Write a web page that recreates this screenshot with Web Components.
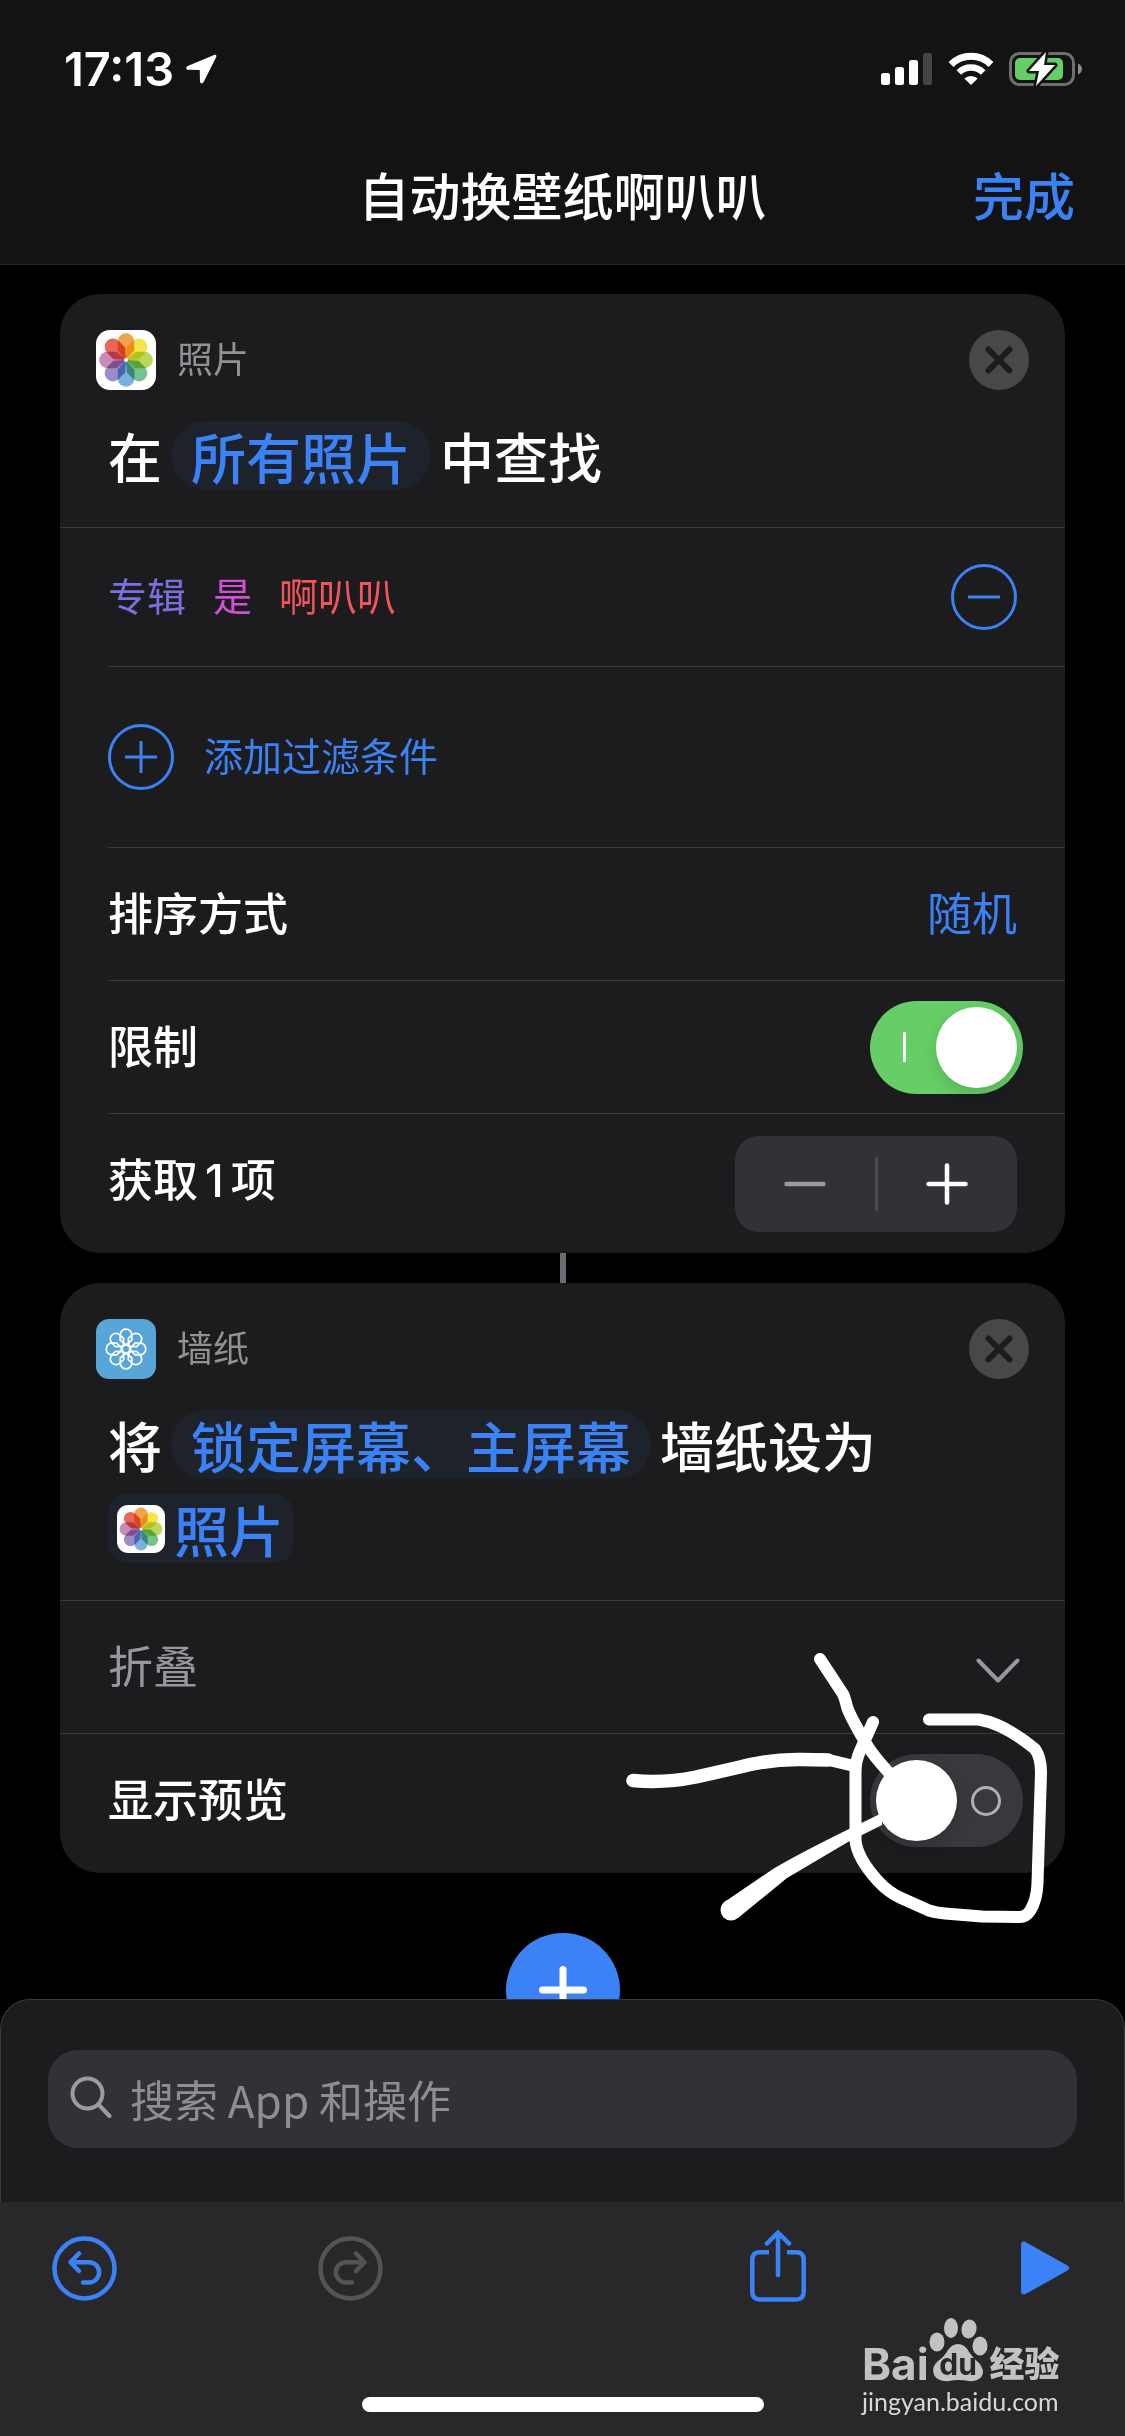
<!DOCTYPE html>
<html lang="zh-CN">
<head>
<meta charset="utf-8">
<meta name="viewport" content="width=device-width, initial-scale=1">
<title>自动换壁纸啊叭叭</title>
<style>
    :root {
        --blue: #3b82f7;
        --gray: #929194;
        --card: #1c1c1e;
        --control: #323136;
        --line: #3a3a3c;
    }

    body {
        margin: 0;
        background: #000;
        color: #fff;
        font-family: Inter, "Noto Sans CJK SC", sans-serif;
        font-size: 45px;
        line-height: 1.4;
    }
</style>
</head>
<body>
<shortcut-editor>
    <status-bar slot="top" time="17:13"></status-bar>
    <nav-bar slot="top" action="完成">自动换壁纸啊叭叭</nav-bar>

    <action-card name="照片" icon="photos">
        <summary-line slot="summary">
            <span>在</span>
            <param-pill>所有照片</param-pill>
            <span>中查找</span>
        </summary-line>
        <filter-row field="专辑" operator="是" value="啊叭叭"></filter-row>
        <add-filter-row>添加过滤条件</add-filter-row>
        <value-row value="随机">排序方式</value-row>
        <toggle-row checked>限制</toggle-row>
        <stepper-row class="last" count="1"></stepper-row>
    </action-card>

    <step-link></step-link>

    <action-card name="墙纸" icon="wallpaper">
        <summary-line slot="summary">
            <span>将</span>
            <param-pill>锁定屏幕、主屏幕</param-pill>
            <span>墙纸设为</span>
            <param-pill variable icon="photos">照片</param-pill>
        </summary-line>
        <collapse-row>折叠</collapse-row>
        <toggle-row class="last full">显示预览</toggle-row>
        <ink-marks slot="overlay"></ink-marks>
    </action-card>

    <add-button></add-button>

    <search-panel slot="bottom" hint="搜索 App 和操作"></search-panel>
    <tool-bar slot="bottom"></tool-bar>
</shortcut-editor>

<script>
class BaseElement extends HTMLElement {
    constructor() {
        super();
        this.attachShadow({ mode: 'open' });
    }

    connectedCallback() {
        this.shadowRoot.innerHTML = `
            <style>
                * { box-sizing: border-box; }
                :host { display: block; box-sizing: border-box; }
                svg { display: block; flex: none; }
                button {
                    flex: none;
                    padding: 0;
                    border: 0;
                    background: none;
                    color: var(--blue);
                    font: inherit;
                    cursor: pointer;
                }
            </style>
            ${this.render()}
        `;
    }
}

class ShortcutEditor extends BaseElement {
    render() {
        return `
            <style>
                :host { display: flex; flex-direction: column; height: 100vh; }
                header {
                    background: #131313;
                    border-bottom: 1px solid #252527;
                }
                main {
                    flex: 1;
                    min-height: 0;
                    overflow: auto;
                    scrollbar-width: none;
                    padding: 29px 60px 0;
                }
            </style>
            <header><slot name="top"></slot></header>
            <main><slot></slot></main>
            <footer><slot name="bottom"></slot></footer>
        `;
    }
}

class StatusBar extends BaseElement {
    render() {
        return `
            <style>
                :host {
                    display: flex;
                    align-items: center;
                    gap: 12px;
                    height: 138px;
                    padding: 0 42px 0 64px;
                    font-size: 47px;
                    font-weight: 600;
                }
                .signals { display: flex; align-items: center; gap: 15px; margin-left: auto; }
            </style>
            <span>${this.getAttribute('time')}</span>
            <svg width="31" height="30" viewBox="0 0 32 30" fill="#fff">
                <path d="M29 .5 1.800 11.800C-.5 12.900 .1 15.800 2.200 15.800L14.200 16 14.400 27.600C14.400 30.200 17.200 30.400 18.200 28.400L31.200 2.600C31.900 1 30.700-.2 29 .5Z"/>
            </svg>
            <div class="signals">
                <svg width="52" height="34" viewBox="0 0 52 34" fill="#fff">
                    <rect x="0" y="21" width="9" height="12" rx="2.500"/>
                    <rect x="14" y="15" width="9" height="18" rx="2.500"/>
                    <rect x="28" y="8" width="9" height="25" rx="2.500"/>
                    <rect x="42" y="1" width="9" height="32" rx="2.500" fill="#454545"/>
                </svg>
                <svg width="46" height="34" viewBox="0 0 46 34" fill="none" stroke="#fff" stroke-width="7">
                    <path d="M3 12.500A28.500 28.500 0 0 1 43 12.500"/>
                    <path d="M10.800 20.500A17.500 17.500 0 0 1 35.200 20.500" stroke-width="6.500"/>
                    <path d="M23 33 16.300 26.600A9.800 9.800 0 0 1 29.700 26.600Z" fill="#fff" stroke="none"/>
                </svg>
                <svg width="74" height="36" viewBox="0 0 74 36">
                    <rect x="1.500" y="2.500" width="63" height="31" rx="9" fill="none" stroke="#6f6f6f" stroke-width="3"/>
                    <path d="M69 12.500Q73 14.500 73 18T69 23.500Z" fill="#8a8a8a"/>
                    <rect x="6" y="7" width="48" height="22" rx="5" fill="#67ce67"/>
                    <path d="M37 1 20 20H30L27 35 46 14H35Z" fill="#fff" stroke="#131313" stroke-width="5" stroke-linejoin="round" paint-order="stroke"/>
                </svg>
            </div>
        `;
    }
}

class NavBar extends BaseElement {
    render() {
        return `
            <style>
                :host {
                    display: grid;
                    grid-template-columns: 1fr auto 1fr;
                    align-items: center;
                    height: 126px;
                    padding: 0 50px 6px;
                    font-size: 51px;
                    font-weight: 500;
                }
                h1 { grid-column: 2; margin: 0; font: inherit; }
                button { justify-self: end; }
            </style>
            <h1><slot></slot></h1>
            <button type="button">${this.getAttribute('action')}</button>
        `;
    }
}

const petals = shape => [0, 45, 90, 135, 180, 225, 270, 315]
    .map((angle, i) => shape(`transform="rotate(${angle})"`, i))
    .join('');

const petalColors = ['#f1a24c', '#f6e549', '#bcd65e', '#76c28c', '#79b1e0', '#9d8dc6', '#cb8bb7', '#e6675b'];

const appIcons = {
    photos: `
        <rect x="-30" y="-30" width="60" height="60" rx="14" fill="#fff"/>
        <g style="isolation: isolate">
            ${petals((turn, i) => `<path ${turn} fill="${petalColors[i]}" style="mix-blend-mode: multiply" d="M0 0-8.300-9.500V-18.500A8.300 8.300 0 0 1 8.300-18.500V-9.500Z"/>`)}
        </g>
        <circle r="2" fill="#fff"/>
    `,
    wallpaper: `
        <rect x="-30" y="-30" width="60" height="60" rx="13" fill="#58a6d8"/>
        <g fill="none" stroke="#fff" stroke-width="1.700">
            ${petals(turn => `<path ${turn} d="M0-4-5.800-9V-14A5.800 5.800 0 0 1 5.800-14V-9Z"/>`)}
            <circle r="4"/>
        </g>
    `
};

class AppIcon extends BaseElement {
    render() {
        return `
            <style>
                :host { flex: none; width: 60px; height: 60px; }
                svg { width: 100%; height: 100%; }
            </style>
            <svg viewBox="-30 -30 60 60">${appIcons[this.getAttribute('name')]}</svg>
        `;
    }
}

class ActionCard extends BaseElement {
    render() {
        return `
            <style>
                :host {
                    position: relative;
                    background: var(--card);
                    border-radius: 40px;
                }
                .head {
                    display: flex;
                    align-items: center;
                    gap: 21px;
                    padding: 36px 36px 31px;
                    color: var(--gray);
                    font-size: 36px;
                    line-height: 60px;
                }
                button { margin-left: auto; }
                .summary {
                    padding: 0 48px 37px;
                    border-bottom: 1px solid var(--line);
                }
            </style>
            <div class="head">
                <app-icon name="${this.getAttribute('icon')}"></app-icon>
                <span>${this.getAttribute('name')}</span>
                <button type="button" aria-label="移除">
                    <svg width="60" height="60" viewBox="0 0 60 60">
                        <circle cx="30" cy="30" r="30" fill="#48484a"/>
                        <path d="M19.500 19.500 40.500 40.500M40.500 19.500 19.500 40.500" stroke="#1c1c1e" stroke-width="6" stroke-linecap="round"/>
                    </svg>
                </button>
            </div>
            <div class="summary"><slot name="summary"></slot></div>
            <slot></slot>
            <slot name="overlay"></slot>
        `;
    }
}

class SummaryLine extends BaseElement {
    render() {
        return `
            <style>
                :host {
                    display: flex;
                    flex-wrap: wrap;
                    gap: 15px 9px;
                    font-family: "Noto Sans CJK SC", sans-serif;
                    font-size: 54px;
                    font-weight: 500;
                    line-height: 69px;
                }
            </style>
            <slot></slot>
        `;
    }
}

class ParamPill extends BaseElement {
    render() {
        const icon = this.getAttribute('icon');
        return `
            <style>
                :host {
                    border-radius: 35px;
                    background: #1e222b;
                    font-size: 55px;
                }
                :host([variable]) { border-radius: 18px; }
                button {
                    display: flex;
                    align-items: center;
                    gap: 9px;
                    height: 69px;
                    padding: 0 20px;
                }
                :host([variable]) button { padding: 0 9px; }
                app-icon { width: 48px; height: 48px; }
            </style>
            <button type="button">
                ${icon ? `<app-icon name="${icon}"></app-icon>` : ''}
                <slot></slot>
            </button>
        `;
    }
}

// Shared box of every row below a card's summary
class CardRow extends BaseElement {
    render() {
        return `
            <style>
                :host { padding-left: 48px; }
                :host(.full) { padding-left: 0; }
                .row {
                    display: flex;
                    align-items: center;
                    justify-content: space-between;
                    height: 133px;
                    padding-right: 48px;
                    border-bottom: 1px solid var(--line);
                    font-weight: 500;
                }
                :host(.full) .row { padding-left: 48px; }
                :host(.last) .row {
                    height: 139px;
                    padding-bottom: 6px;
                    border-bottom: 0;
                }
            </style>
            ${this.renderRow()}
        `;
    }
}

class FilterRow extends CardRow {
    renderRow() {
        return `
            <style>
                .row { height: 139px; font-size: 39px; font-weight: 400; }
                .parts { display: flex; gap: 27px; }
                .field { color: #7b70e2; }
                .operator { color: #cf52d6; }
                .value { color: #f2545b; }
            </style>
            <div class="row">
                <div class="parts">
                    <button type="button" class="field">${this.getAttribute('field')}</button>
                    <button type="button" class="operator">${this.getAttribute('operator')}</button>
                    <button type="button" class="value">${this.getAttribute('value')}</button>
                </div>
                <button type="button" aria-label="删除过滤条件">
                    <svg width="66" height="66" viewBox="0 0 66 66" fill="none" stroke="currentColor" stroke-width="3">
                        <circle cx="33" cy="33" r="31.500"/>
                        <path d="M17 33H49"/>
                    </svg>
                </button>
            </div>
        `;
    }
}

class AddFilterRow extends CardRow {
    renderRow() {
        return `
            <style>
                .row { height: 181px; font-size: 39px; font-weight: 400; }
                button { display: flex; align-items: center; gap: 30px; }
            </style>
            <div class="row">
                <button type="button">
                    <svg width="66" height="66" viewBox="0 0 66 66" fill="none" stroke="currentColor" stroke-width="3">
                        <circle cx="33" cy="33" r="31.500"/>
                        <path d="M17 33H49M33 17V49"/>
                    </svg>
                    <slot></slot>
                </button>
            </div>
        `;
    }
}

class ValueRow extends CardRow {
    renderRow() {
        return `
            <style>
                button { font-weight: 400; }
            </style>
            <div class="row">
                <slot></slot>
                <button type="button">${this.getAttribute('value')}</button>
            </div>
        `;
    }
}

class ToggleRow extends CardRow {
    renderRow() {
        return `
            <style>
                .row { padding-right: 42px; }
                input {
                    appearance: none;
                    display: flex;
                    align-items: center;
                    justify-content: space-between;
                    width: 153px;
                    height: 93px;
                    margin: 0;
                    padding: 0 22px 0 6px;
                    border-radius: 47px;
                    background: #39383d;
                }
                input::before {
                    content: "";
                    width: 81px;
                    height: 81px;
                    border-radius: 50%;
                    background: #fff;
                    box-shadow: 0 6px 16px rgba(0, 0, 0, .15);
                }
                input::after {
                    content: "";
                    box-sizing: border-box;
                    width: 30px;
                    height: 30px;
                    border: 3px solid #b0b0b2;
                    border-radius: 50%;
                }
                input:checked {
                    flex-direction: row-reverse;
                    padding: 0 6px 0 33px;
                    background: #67ce67;
                }
                input:checked::after {
                    width: 3px;
                    border: 0;
                    border-radius: 0;
                    background: #fff;
                }
            </style>
            <label class="row">
                <slot></slot>
                <input type="checkbox" role="switch" ${this.hasAttribute('checked') ? 'checked' : ''}>
            </label>
        `;
    }
}

class StepperRow extends CardRow {
    renderRow() {
        return `
            <style>
                :host(.last) .row { padding-bottom: 0; }
                .label { padding-bottom: 6px; }
                .count { margin: 0 7px; }
                .stepper {
                    display: flex;
                    align-items: center;
                    width: 282px;
                    height: 96px;
                    border-radius: 24px;
                    background: var(--control);
                }
                button {
                    flex: 1;
                    display: grid;
                    place-items: center;
                    height: 100%;
                    color: #fff;
                }
                button:disabled { color: #99989b; }
                i { width: 3px; height: 54px; background: #4b4a4f; }
            </style>
            <div class="row">
                <span class="label">获取<span class="count">${this.getAttribute('count')}</span>项</span>
                <div class="stepper" role="group" aria-label="项数">
                    <button type="button" aria-label="减少" disabled>
                        <svg width="42" height="42" viewBox="0 0 42 42" stroke="currentColor" stroke-width="4.500" stroke-linecap="round"><path d="M2.500 21H39.500"/></svg>
                    </button>
                    <i></i>
                    <button type="button" aria-label="增加">
                        <svg width="42" height="42" viewBox="0 0 42 42" stroke="currentColor" stroke-width="4.500" stroke-linecap="round"><path d="M2.500 21H39.500M21 2.500V39.500"/></svg>
                    </button>
                </div>
            </div>
        `;
    }
}

class CollapseRow extends CardRow {
    renderRow() {
        return `
            <style>
                :host { padding-left: 0; }
                button.row {
                    width: 100%;
                    padding: 0 45px 0 48px;
                    border-bottom: 1px solid var(--line);
                    color: #98979d;
                    font-weight: 400;
                }
            </style>
            <button type="button" class="row">
                <slot></slot>
                <svg width="44" height="32" viewBox="0 0 44 32" fill="none" stroke="currentColor" stroke-width="4" stroke-linecap="round" stroke-linejoin="round">
                    <path d="M2.500 9.500 22 29.500 41.500 9.500"/>
                </svg>
            </button>
        `;
    }
}

class StepLink extends BaseElement {
    render() {
        return `
            <style>
                :host { width: 6px; height: 30px; margin: 0 auto; background: #6b6a70; }
            </style>
        `;
    }
}

// Hand-drawn marker strokes laid over the card's corner
class InkMarks extends BaseElement {
    render() {
        return `
            <style>
                :host {
                    position: absolute;
                    right: 15px;
                    bottom: -57px;
                    pointer-events: none;
                }
            </style>
            <svg width="430" height="285" viewBox="620 1645 430 285" fill="none" stroke="#fff" stroke-width="12" stroke-linecap="round" stroke-linejoin="round">
                <path d="M820 1659 843 1694Q845 1698 847 1707 850 1716 864 1740 872 1755 893 1777"/>
                <path d="M633 1780.500Q664 1783.500 696 1777L740 1767Q770 1759 801 1759.500L828 1760" stroke-width="13.500"/>
                <path d="M822 1759.500 829 1760 854 1766"/>
                <path d="M873 1722 860 1751Q855.500 1761 855.500 1772V1840Q857 1858 878 1881 888 1892 901 1898L929 1910.500Q936 1913 945 1913.500L982 1916.500 1020 1917Q1026 1917 1030 1911 1037 1900 1037.500 1883L1041 1773Q1041 1757 1035 1749 1005 1724 979 1719.500H929"/>
                <path d="M724.500 1902 773 1869Q800 1853 849 1829L882 1813V1825L848 1842 787 1878 738 1918Z" fill="#fff" stroke="none"/>
                <circle cx="731" cy="1910" r="10.500" fill="#fff" stroke="none"/>
            </svg>
        `;
    }
}

class AddButton extends BaseElement {
    render() {
        return `
            <style>
                :host { display: flex; justify-content: center; padding: 60px 0; }
            </style>
            <button type="button" aria-label="添加操作">
                <svg width="114" height="114" viewBox="0 0 114 114">
                    <circle cx="57" cy="57" r="57" fill="#3b82f7"/>
                    <path d="M36.500 57H77.500M57 36.500V77.500" stroke="#fff" stroke-width="7" stroke-linecap="round"/>
                </svg>
            </button>
        `;
    }
}

class SearchPanel extends BaseElement {
    render() {
        return `
            <style>
                :host {
                    padding: 50px 47px 54px;
                    border: 1px solid var(--line);
                    border-bottom: 0;
                    border-radius: 30px 30px 0 0;
                    background: var(--card);
                }
                label {
                    display: flex;
                    align-items: center;
                    gap: 18px;
                    height: 98px;
                    padding: 0 22px;
                    border-radius: 30px;
                    background: var(--control);
                    color: #9c9ba3;
                }
                svg { margin-bottom: 4px; }
                input {
                    flex: 1;
                    min-width: 0;
                    padding: 0;
                    border: 0;
                    outline: 0;
                    background: none;
                    color: #fff;
                    font: 44px "Noto Sans CJK SC", sans-serif;
                }
                input::placeholder { color: #8e8d92; opacity: 1; }
            </style>
            <label>
                <svg width="42" height="44" viewBox="0 0 42 44" fill="none" stroke="currentColor" stroke-width="4" stroke-linecap="round">
                    <circle cx="17.500" cy="18.500" r="15"/>
                    <path d="M28.500 29.500 39.500 41"/>
                </svg>
                <input type="search" aria-label="搜索" placeholder="${this.getAttribute('hint')}">
            </label>
        `;
    }
}

class ToolBar extends BaseElement {
    render() {
        return `
            <style>
                :host {
                    position: relative;
                    height: 234px;
                    padding-top: 28px;
                    background: #28282a;
                }
                nav {
                    display: flex;
                    justify-content: space-between;
                    padding: 0 56px 0 52px;
                }
                .group { display: flex; align-items: center; height: 76px; gap: 201px; }
                .group.right { gap: 215px; }
                button:disabled { color: #545454; }
                .home {
                    width: 402px;
                    height: 15px;
                    margin: 91px auto 0;
                    border-radius: 8px;
                    background: #fff;
                }
                baidu-mark { position: absolute; right: 60px; bottom: 20px; }
            </style>
            <nav>
                <div class="group">
                    <button type="button" aria-label="撤销">
                        <svg width="65" height="65" viewBox="0 0 65 65" fill="none" stroke="currentColor" stroke-width="4.500" stroke-linecap="round" stroke-linejoin="round">
                            <circle cx="32.500" cy="32.500" r="30"/>
                            <path d="M27 17.500 18.500 26.200 27 35M18.500 26.200H37A10 10 0 0 1 37 46.500H31"/>
                        </svg>
                    </button>
                    <button type="button" aria-label="重做" disabled>
                        <svg width="65" height="65" viewBox="0 0 65 65" fill="none" stroke="currentColor" stroke-width="4.500" stroke-linecap="round" stroke-linejoin="round">
                            <circle cx="32.500" cy="32.500" r="30"/>
                            <path d="M38 17.500 46.500 26.200 38 35M46.500 26.200H28A10 10 0 0 0 28 46.500H34"/>
                        </svg>
                    </button>
                </div>
                <div class="group right">
                    <button type="button" aria-label="共享">
                        <svg width="56" height="76" viewBox="0 0 56 76" fill="none" stroke="currentColor" stroke-width="4.500" stroke-linecap="round" stroke-linejoin="round">
                            <path d="M19 22.300H10Q2.300 22.300 2.300 30V61.500Q2.300 69.500 10 69.500H46Q53.700 69.500 53.700 61.500V30Q53.700 22.300 46 22.300H37" stroke-linecap="butt"/>
                            <path d="M28 45V3M17 13.500 28 2.500 39 13.500"/>
                        </svg>
                    </button>
                    <button type="button" aria-label="运行">
                        <svg width="48" height="54" viewBox="0 0 48 54" fill="currentColor" stroke="currentColor" stroke-width="6" stroke-linejoin="round">
                            <path d="M3 3.500V50.500L45 27Z"/>
                        </svg>
                    </button>
                </div>
            </nav>
            <div class="home"></div>
            <baidu-mark></baidu-mark>
        `;
    }
}

class BaiduMark extends BaseElement {
    render() {
        return `
            <style>
                :host { width: 203px; color: #c2c2c2; pointer-events: none; }
                .logo {
                    display: flex;
                    align-items: flex-end;
                    height: 66px;
                    margin-bottom: 4px;
                    font-weight: 700;
                    line-height: 36px;
                }
                .bai { font-size: 44px; font-family: Inter, sans-serif; }
                .paw { position: relative; width: 59px; height: 64px; }
                .du {
                    position: absolute;
                    inset: auto 0 0;
                    color: #28282a;
                    font-size: 30px;
                    text-align: center;
                }
                .jy { margin-left: 2px; font-size: 35px; font-weight: 900; }
                .url {
                    color: #d8d8d8;
                    font: 25px/30px Lato, sans-serif;
                }
            </style>
            <div class="logo">
                <span class="bai">Bai</span>
                <span class="paw">
                    <svg width="59" height="64" viewBox="0 0 59 64" fill="currentColor">
                        <ellipse cx="8" cy="24" rx="7.500" ry="9.500"/>
                        <ellipse cx="22" cy="10" rx="7" ry="10"/>
                        <ellipse cx="40" cy="11" rx="7.500" ry="9.500" transform="rotate(12 40 11)"/>
                        <ellipse cx="51" cy="28" rx="7.500" ry="9.500"/>
                        <path d="M29 26Q36 26 40 34 44 40 50 45 56 52 53 58 49 64 40 63 29 61 20 63 9 64 5 57 2 49 9 43 15 39 19 32 23 26 29 26Z"/>
                    </svg>
                    <span class="du">du</span>
                </span>
                <span class="jy">经验</span>
            </div>
            <div class="url">jingyan.baidu.com</div>
        `;
    }
}

customElements.define('shortcut-editor', ShortcutEditor);
customElements.define('status-bar', StatusBar);
customElements.define('nav-bar', NavBar);
customElements.define('app-icon', AppIcon);
customElements.define('action-card', ActionCard);
customElements.define('summary-line', SummaryLine);
customElements.define('param-pill', ParamPill);
customElements.define('filter-row', FilterRow);
customElements.define('add-filter-row', AddFilterRow);
customElements.define('value-row', ValueRow);
customElements.define('toggle-row', ToggleRow);
customElements.define('stepper-row', StepperRow);
customElements.define('collapse-row', CollapseRow);
customElements.define('step-link', StepLink);
customElements.define('ink-marks', InkMarks);
customElements.define('add-button', AddButton);
customElements.define('search-panel', SearchPanel);
customElements.define('tool-bar', ToolBar);
customElements.define('baidu-mark', BaiduMark);
</script>
</body>
</html>
